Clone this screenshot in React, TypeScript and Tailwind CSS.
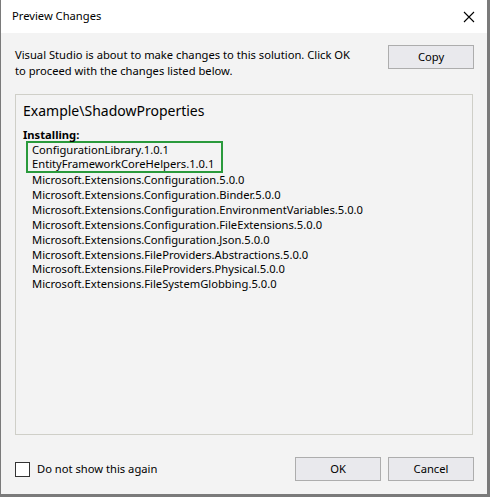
import React from "react";

const items = [
  "Microsoft.Extensions.Configuration.5.0.0",
  "Microsoft.Extensions.Configuration.Binder.5.0.0",
  "Microsoft.Extensions.Configuration.EnvironmentVariables.5.0.0",
  "Microsoft.Extensions.Configuration.FileExtensions.5.0.0",
  "Microsoft.Extensions.Configuration.Json.5.0.0",
  "Microsoft.Extensions.FileProviders.Abstractions.5.0.0",
  "Microsoft.Extensions.FileProviders.Physical.5.0.0",
  "Microsoft.Extensions.FileSystemGlobbing.5.0.0",
];

const font = { fontFamily: '"Noto Sans", "Open Sans", sans-serif' };

export default function App() {
  return (
    <div
      className="w-[490px] h-[497px] bg-[#7a7a7a] pl-px pr-[3px] pb-[3px] text-[11.2px] text-black"
      style={font}
    >
      <div className="flex flex-col h-full bg-[#f3f3f3]">
        {/* Title bar */}
        <div className="h-[33px] bg-white flex items-center justify-between pl-[11px] pr-[10px] shrink-0">
          <span className="text-[11.2px] text-black">Preview Changes</span>
          <svg width="12" height="12" viewBox="0 0 12 12" className="mr-[2px]">
            <path d="M1 1L11 11M11 1L1 11" stroke="#000" strokeWidth="1.1" />
          </svg>
        </div>

        {/* Body */}
        <div className="flex-1 flex flex-col px-[14px] pt-[12px] pb-[13px]">
          <div className="flex justify-between items-start">
            <p className="leading-[16px] mt-[2px]">
              Visual Studio is about to make changes to this solution. Click OK
              <br />
              to proceed with the changes listed below.
            </p>
            <button className="w-[86px] h-[24px] border border-[#adadad] bg-[#e9e9ed] text-[11.2px] mr-[-1px]">
              Copy
            </button>
          </div>

          <div className="mt-[15px] h-[341px] border border-[#cfcfc8] pl-[7px] pt-[6px]">
            <div className="text-[14px] leading-[20px]">Example\ShadowProperties</div>
            <div className="font-bold mt-[7px] leading-[13px]">Installing:</div>
            <div className="ml-[3px] mr-auto w-[197px] border-2 border-[#2a9a3c] pl-[4px]">
              <div className="leading-[14px]">ConfigurationLibrary.1.0.1</div>
              <div className="leading-[14px]">EntityFrameworkCoreHelpers.1.0.1</div>
            </div>
            <div className="pl-[9px]">
              {items.map((t) => (
                <div key={t} className="leading-[14.9px]">
                  {t}
                </div>
              ))}
            </div>
          </div>

          <div className="mt-auto flex items-center">
            <div className="w-[15px] h-[15px] border border-[#333] bg-white" />
            <span className="ml-[7px]">Do not show this again</span>
            <div className="ml-auto flex gap-[7px]">
              <button className="w-[86px] h-[24px] border border-[#adadad] bg-[#e9e9ed]">OK</button>
              <button className="w-[86px] h-[24px] border border-[#adadad] bg-[#e9e9ed] mr-[-1px]">Cancel</button>
            </div>
          </div>
        </div>
      </div>
    </div>
  );
}
